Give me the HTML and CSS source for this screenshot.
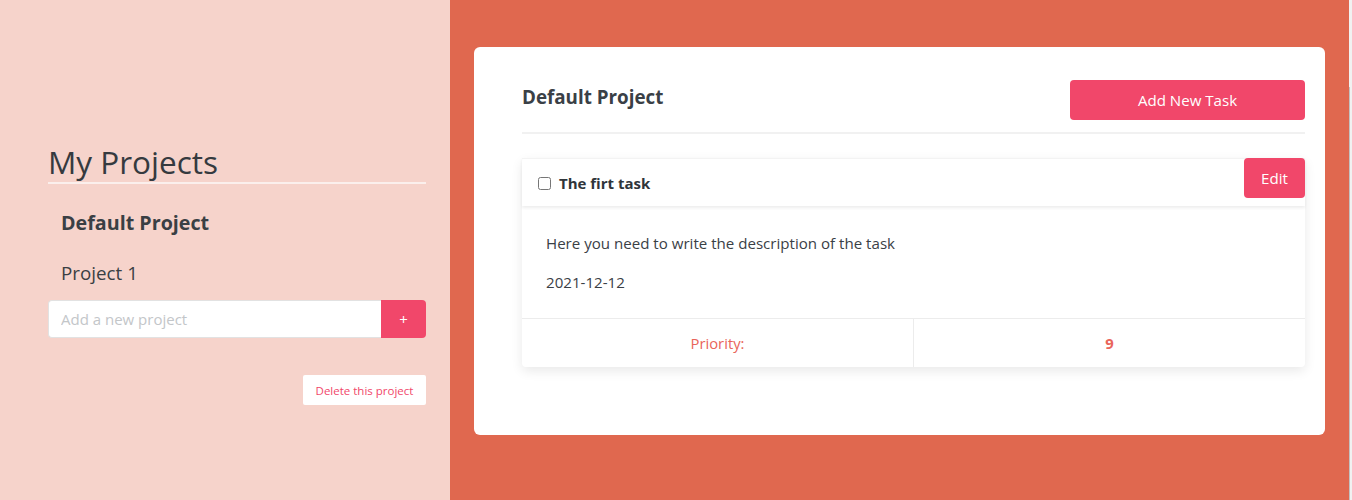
FILE: index.html
```html
<!DOCTYPE html>
<html lang="en">
<head>
<meta charset="utf-8">
<title>Todo</title>
<link rel="stylesheet" href="styles.css">
</head>
<body>
<div class="page">
  <aside class="sidebar">
    <h1 class="side-title">My Projects</h1>
    <ul class="project-list">
      <li class="project active">Default Project</li>
      <li class="project">Project 1</li>
    </ul>
    <form class="add-project">
      <input class="add-input" type="text" placeholder="Add a new project">
      <button class="add-btn" type="button">+</button>
    </form>
    <div class="delete-row">
      <button class="delete-btn" type="button">Delete this project</button>
    </div>
  </aside>
  <main class="main">
    <section class="board">
      <header class="board-head">
        <h2 class="board-title">Default Project</h2>
        <button class="primary-btn new-task" type="button">Add New Task</button>
      </header>
      <article class="task">
        <div class="task-head">
          <label class="task-label"><input type="checkbox" class="task-check"><span>The firt task</span></label>
          <button class="primary-btn edit-btn" type="button">Edit</button>
        </div>
        <div class="task-body">
          <p class="task-desc">Here you need to write the description of the task</p>
          <p class="task-date">2021-12-12</p>
        </div>
        <div class="task-foot">
          <div class="foot-cell">Priority:</div>
          <div class="foot-cell strong">9</div>
        </div>
      </article>
    </section>
  </main>
  <div class="scroll-strip"><div class="scroll-thumb"></div></div>
</div>
</body>
</html>
```

FILE: styles.css
```css
* { box-sizing: border-box; }
html, body { margin: 0; padding: 0; }
body {
  font-family: "Open Sans", "Noto Sans", sans-serif;
  color: #3a4046;
  font-size: 15.1px;
}
.page {
  display: flex;
  height: 500px;
  overflow: hidden;
}
.sidebar {
  width: 450px;
  flex: 0 0 450px;
  background: #f6d3cb;
  padding: 141px 24px 0 48px;
}
.side-title {
  margin: 0;
  font-size: 31.5px;
  font-weight: 400;
  line-height: 41px;
  color: #353a3f;
  border-bottom: 2px solid #fbefec;
}
.project-list {
  list-style: none;
  margin: 0;
  padding: 14px 0 0 13px;
}
.project {
  font-size: 18.8px;
  line-height: 50px;
  height: 50px;
  color: #3a3f44;
}
.project.active { font-weight: 700; font-size: 19.7px; }
.add-project {
  display: flex;
  margin: 2px 0 0;
  height: 38px;
}
.add-input {
  flex: 1;
  border: 1px solid #e2e2e2;
  border-right: 0;
  border-radius: 4px 0 0 4px;
  padding: 0 12px;
  font-family: inherit;
  font-size: 15px;
  color: #333;
  outline: none;
}
.add-input::placeholder { color: #c3c6c9; }
.add-btn {
  width: 45px;
  border: 0;
  border-radius: 0 4px 4px 0;
  background: #f1476a;
  color: #fff;
  font-family: inherit;
  font-size: 15px;
}
.delete-row {
  display: flex;
  justify-content: flex-end;
  margin-top: 37px;
}
.delete-btn {
  width: 123px;
  height: 30px;
  border: 0;
  border-radius: 2px;
  background: #fff;
  color: #f1476a;
  font-family: inherit;
  font-size: 11.5px;
  padding: 0;
}
.main {
  flex: 1;
  background: #e0684f;
  padding: 47px 24px 0;
}
.board {
  background: #fff;
  border-radius: 6px;
  height: 388px;
  padding: 33px 20px 0 48px;
}
.board-head {
  display: flex;
  justify-content: space-between;
  align-items: flex-start;
  padding-bottom: 12px;
  border-bottom: 2px solid #f1f1f1;
}
.board-title {
  margin: 0;
  font-size: 18.8px;
  font-weight: 700;
  line-height: 34px;
  color: #3a4046;
}
.primary-btn {
  border: 0;
  border-radius: 4px;
  background: #f1476a;
  color: #fff;
  font-family: inherit;
  font-size: 15.1px;
  height: 40px;
  padding: 0;
}
.new-task { width: 235px; }
.task {
  margin-top: 24px;
  background: #fff;
  border-radius: 4px;
  box-shadow: 0 4px 12px rgba(0, 0, 0, 0.09);
}
.task-head {
  display: flex;
  justify-content: space-between;
  align-items: flex-start;
  height: 48px;
  box-shadow: 0 2px 3px rgba(0, 0, 0, 0.07);
  border-top: 1px solid #f3f3f3;
}
.task-label {
  display: flex;
  align-items: center;
  height: 48px;
  padding-left: 16px;
  font-weight: 700;
  font-size: 15px;
  color: #2f353a;
}
.task-check {
  width: 13px;
  height: 13px;
  margin: 0 8px 0 0;
}
.edit-btn {
  width: 61px;
  margin-top: -1px;
}
.task-body {
  padding: 25px 24px 9px;
  border-bottom: 1px solid #ececec;
}
.task-body p {
  margin: 0 0 15px;
  line-height: 24px;
  color: #3a4046;
}
.task-foot {
  display: flex;
  height: 48px;
}
.foot-cell {
  flex: 1;
  display: flex;
  align-items: center;
  justify-content: center;
  color: #e9655a;
  font-size: 14.8px;
}
.foot-cell + .foot-cell { border-left: 1px solid #ececec; }
.foot-cell.strong { font-weight: 700; }
.scroll-strip {
  width: 3px;
  flex: 0 0 3px;
  background: #f1f1f1;
  padding-top: 87px;
}
.scroll-thumb {
  width: 1px;
  height: 413px;
  background: #c1c1c1;
}
```
